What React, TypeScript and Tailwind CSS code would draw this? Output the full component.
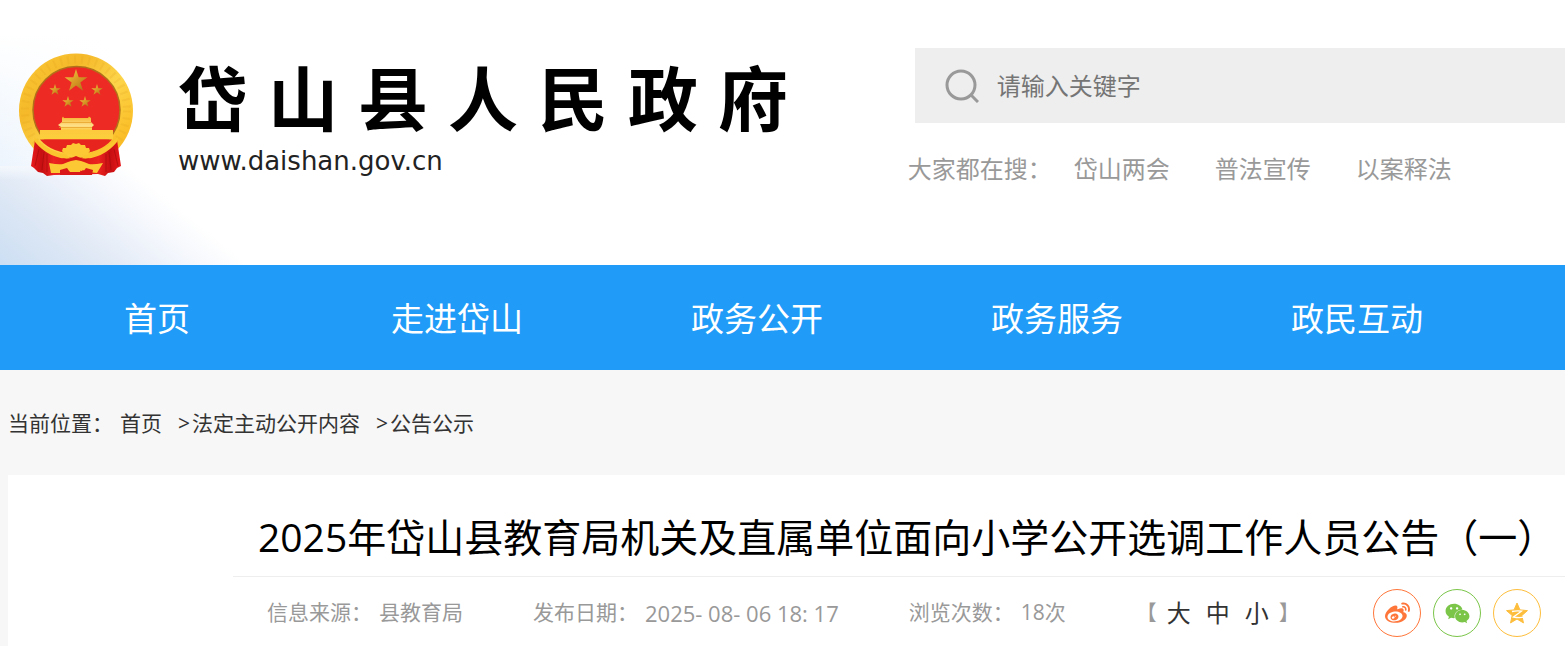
import { FaWeibo, FaWeixin } from "react-icons/fa";

const siteName = ["岱", "山", "县", "人", "民", "政", "府"];

const hotWords = ["岱山两会", "普法宣传", "以案释法"];

const navItems = ["首页", "走进岱山", "政务公开", "政务服务", "政民互动"];

const emblemStars = [
  { cx: 58, cy: 28, r: 12 },
  { cx: 37, cy: 37, r: 6 },
  { cx: 79, cy: 37, r: 6 },
  { cx: 50, cy: 49, r: 6 },
  { cx: 67, cy: 49, r: 6 },
];

const starPoints = (cx: number, cy: number, r: number, inner = 0.38) =>
  Array.from({ length: 10 }, (_, i) => {
    const radius = i % 2 === 0 ? r : r * inner;
    const angle = (Math.PI / 5) * i - Math.PI / 2;
    return `${(cx + radius * Math.cos(angle)).toFixed(2)},${(cy + radius * Math.sin(angle)).toFixed(2)}`;
  }).join(" ");

const Emblem: React.FC = () => (
  <svg
    width="116"
    height="124"
    viewBox="0 0 116 124"
    className="shrink-0"
    role="img"
    aria-label="国徽"
  >
    <defs>
      <linearGradient id="gold" x1="0" x2="1" y1="0" y2="1">
        <stop offset="0%" stopColor="#fbc934" />
        <stop offset="30%" stopColor="#f5b92a" />
        <stop offset="55%" stopColor="#fdd54a" />
        <stop offset="80%" stopColor="#fbc02a" />
        <stop offset="100%" stopColor="#f3ae20" />
      </linearGradient>
      <linearGradient id="star" x1="0" x2="1" y1="0" y2="1">
        <stop offset="0%" stopColor="#f5cf4a" />
        <stop offset="50%" stopColor="#d99a25" />
        <stop offset="100%" stopColor="#a86c1a" />
      </linearGradient>
      <linearGradient id="drape" x1="0" x2="1" y1="0" y2="0">
        <stop offset="0%" stopColor="#e8191b" />
        <stop offset="12%" stopColor="#c70f12" />
        <stop offset="25%" stopColor="#ec2320" />
        <stop offset="50%" stopColor="#d51614" />
        <stop offset="75%" stopColor="#ec2320" />
        <stop offset="88%" stopColor="#c70f12" />
        <stop offset="100%" stopColor="#e8191b" />
      </linearGradient>
      <linearGradient id="gate" x1="0" x2="0" y1="0" y2="1">
        <stop offset="0%" stopColor="#f7b32c" />
        <stop offset="40%" stopColor="#fde08a" />
        <stop offset="60%" stopColor="#fdc93d" />
        <stop offset="100%" stopColor="#fbd03c" />
      </linearGradient>
    </defs>
    <circle cx="58" cy="57.500" r="57" fill="url(#gold)" />
    <circle
      cx="58"
      cy="57.500"
      r="51"
      fill="none"
      stroke="#e09f1e"
      strokeWidth="8"
      strokeDasharray="2 5"
      opacity="0.2"
    />
    <circle
      cx="58.500"
      cy="57"
      r="43.500"
      fill="#ed2a24"
      stroke="#b0711a"
      strokeWidth="1.500"
    />
    {emblemStars.map(({ cx, cy, r }) => (
      <polygon
        key={`${cx}-${cy}`}
        points={starPoints(cx, cy, r)}
        fill="url(#star)"
      />
    ))}
    <path
      d="M44 65l1-1.500 1 1.500h24l1-1.500 2 1.500v4l3 3-2 2v3h21v9.500H22V77h21v-3l-3-2 4-3z"
      fill="url(#gate)"
    />
    <path d="M44 69.500h29M41 74.500h33" stroke="#e79f25" opacity="0.7" />
    <path d="M22 86.500h72q-12 14-36 14t-36-14z" fill="#e8241f" />
    <path
      d="M17 87l12 11q14 7 29 7 15 0 29-7l12-11 4 26-4 2-3 4-6 1-3 3-7-2-44 1-7 1-4-3-5-1-4-4-3-2z"
      fill="url(#drape)"
    />
    <path
      d="M21 96l-4 17M26 99l-2 18M29 101v18M96 96l4 17M91 99l2 18M88 101v18"
      stroke="#a90d0d"
      opacity="0.7"
    />
    <path
      d="M16 84q16 16 32 17l5 5q-22 0-36-17zM100 84q-16 16-32 17l-5 5q22 0 36-17z"
      fill="#fbc52f"
    />
    <path
      d="M44 98l1-3 3 0 1-3 4 0 2-2 3 1 3-1 2 2 4 0 1 3 3 0 1 3-3 4-6-1-5 3-5-3-6 1z"
      fill="#fcc834"
    />
    <path d="M44 105q7 2 14-2 7 4 14 2l-5 3H49z" fill="#d91817" />
    <path
      d="M31 110q10 2 14 1l5-2 3-1 5-1 5 1 3 1 5 2q4 1 14-1l-6 10-10-1-6-3-1 3-4 2-4-1-4 1-2-3-6 2-9 0z"
      fill="#fcc834"
    />
    <path d="M42 117l7-2 3 4h13l3-4 7 2-1 5H42z" fill="#d91817" />
    <path d="M50 114h17l-3 4-3-1-3 2-3-2-4 1z" fill="#fcc834" />
  </svg>
);

const Landscape: React.FC = () => (
  <svg
    className="absolute bottom-0 left-0"
    width="300"
    height="265"
    viewBox="0 0 300 265"
    aria-hidden="true"
  >
    <defs>
      <linearGradient id="sky" x1="0" x2="1" y1="0" y2="0">
        <stop offset="0%" stopColor="#ecf4fd" />
        <stop offset="100%" stopColor="#ffffff" />
      </linearGradient>
      <linearGradient id="skyFade" x1="0" x2="0" y1="0" y2="1">
        <stop offset="20%" stopColor="#ffffff" />
        <stop offset="100%" stopColor="#ffffff" stopOpacity="0" />
      </linearGradient>
      <linearGradient
        id="snow"
        gradientUnits="userSpaceOnUse"
        x1="0"
        y1="265"
        x2="99"
        y2="143"
      >
        <stop offset="0%" stopColor="#ccdff3" />
        <stop offset="40%" stopColor="#dfe8f5" />
        <stop offset="75%" stopColor="#f3f6fc" />
        <stop offset="100%" stopColor="#ffffff" />
      </linearGradient>
      <linearGradient id="horizon" x1="0" x2="0" y1="0" y2="1">
        <stop offset="0%" stopColor="#f4f8fd" />
        <stop offset="100%" stopColor="#f4f8fd" stopOpacity="0" />
      </linearGradient>
    </defs>
    <rect width="110" height="170" fill="url(#sky)" />
    <rect width="110" height="170" fill="url(#skyFade)" />
    <rect y="166" width="300" height="99" fill="url(#snow)" />
    <rect y="166" width="110" height="14" fill="url(#horizon)" />
  </svg>
);

const SearchIcon: React.FC = () => (
  <svg width="34" height="34" viewBox="0 0 34 34" fill="none" stroke="#999999">
    <circle cx="16" cy="16" r="14" strokeWidth="3" />
    <path d="M26 26l7 7" strokeWidth="3" />
  </svg>
);

const QzoneIcon: React.FC = () => (
  <svg width="24" height="24" viewBox="0 0 24 24" aria-hidden="true">
    <polygon
      points={starPoints(12, 13, 11, 0.46)}
      fill="#fdbe3d"
      stroke="#fdbe3d"
      strokeLinejoin="round"
    />
    <path
      d="M7 10.500q5-1.200 9.500-.3L8.500 16q5 1 11 .2"
      fill="none"
      stroke="#ffffff"
      strokeWidth="1.300"
    />
  </svg>
);

const Header: React.FC = () => (
  <header className="relative flex bg-white pb-[78px] pt-12">
    <Landscape />
    <a
      href="#home"
      className="relative flex w-[58%] shrink-0 items-start gap-11 pl-[18px] pt-[5px] text-black"
    >
      <Emblem />
      <span className="flex flex-col">
        <span className="flex gap-5 text-[70px] font-bold leading-[92px]">
          {siteName.map((char) => (
            <span key={char}>{char}</span>
          ))}
        </span>
        <span className="font-['DejaVu_Sans'] text-[26px] leading-8 text-[#222222]">
          www.daishan.gov.cn
        </span>
      </span>
    </a>
    <div className="min-w-0 flex-1 text-2xl">
      <form className="ml-[7px] flex h-[75px] items-center gap-[18px] bg-[#eeeeee] pl-[30px]">
        <button type="button" aria-label="搜索">
          <SearchIcon />
        </button>
        <input
          type="text"
          aria-label="请输入关键字"
          placeholder="请输入关键字"
          className="min-w-0 flex-1 bg-transparent outline-none placeholder:text-[#757575]"
        />
      </form>
      <div className="mt-7 flex whitespace-nowrap leading-9 text-[#999999]">
        <span className="mr-[22px]">大家都在搜：</span>
        <div className="flex gap-[45px]">
          {hotWords.map((word) => (
            <a key={word} href="#search">
              {word}
            </a>
          ))}
        </div>
      </div>
    </div>
  </header>
);

const Nav: React.FC = () => (
  <nav className="flex h-[105px] items-center bg-[#209cf8] pl-[7px] pr-[58px] pt-[2px]">
    {navItems.map((item) => (
      <a
        key={item}
        href="#nav"
        className="flex-1 whitespace-nowrap text-center text-[33px] text-white"
      >
        {item}
      </a>
    ))}
  </nav>
);

const Breadcrumb: React.FC = () => (
  <div className="flex h-[105px] items-center whitespace-nowrap pl-2 pt-[2px] text-[21px] text-[#333333]">
    <span className="mr-[7px]">当前位置：</span>
    <a href="#home">首页</a>
    <span className="ml-4 mr-[2px]">&gt;</span>
    <a href="#content">法定主动公开内容</a>
    <span className="ml-4 mr-[2px]">&gt;</span>
    <a href="#notice">公告公示</a>
  </div>
);

const ArticleMeta: React.FC = () => (
  <div className="flex h-[70px] items-center justify-between whitespace-nowrap pl-[34px] pr-6 pt-[2px] text-[21px] text-[#999999]">
    <div className="flex items-center gap-[70px]">
      <p className="flex items-center gap-[7px]">
        <span>信息来源：</span>
        <span>县教育局</span>
      </p>
      <p className="flex items-center gap-[7px]">
        <span>发布日期：</span>
        <span className="text-[22px]">2025- 08- 06 18: 17</span>
      </p>
      <p className="flex items-center gap-[7px]">
        <span>浏览次数：</span>
        <span>18次</span>
      </p>
      <div className="flex items-center">
        <span>【</span>
        <div className="flex gap-[15px] px-[10px] text-2xl text-[#333333]">
          <button type="button">大</button>
          <button type="button">中</button>
          <button type="button">小</button>
        </div>
        <span>】</span>
      </div>
    </div>
    <div className="flex gap-3">
      <a
        href="#weibo"
        aria-label="微博"
        className="flex size-12 items-center justify-center rounded-full border border-[#ff763b] text-[#ff763b]"
      >
        <FaWeibo size={25} />
      </a>
      <a
        href="#wechat"
        aria-label="微信"
        className="flex size-12 items-center justify-center rounded-full border border-[#7bc549] text-[#7bc549]"
      >
        <FaWeixin size={25} />
      </a>
      <a
        href="#qzone"
        aria-label="QQ空间"
        className="flex size-12 items-center justify-center rounded-full border border-[#fdbe3d]"
      >
        <QzoneIcon />
      </a>
    </div>
  </div>
);

const App: React.FC = () => (
  <div className="min-h-screen overflow-hidden bg-[#f7f7f7] font-['Open_Sans','Noto_Sans_CJK_SC',sans-serif]">
    <Header />
    <Nav />
    <Breadcrumb />
    <main className="ml-2 bg-white pl-[225px] pt-[30px]">
      <h1 className="whitespace-nowrap border-b border-[#eeeeee] pb-2 pl-[25px] text-[39px] leading-[63px] text-black">
        2025年岱山县教育局机关及直属单位面向小学公开选调工作人员公告（一）
      </h1>
      <ArticleMeta />
    </main>
  </div>
);

export default App;
